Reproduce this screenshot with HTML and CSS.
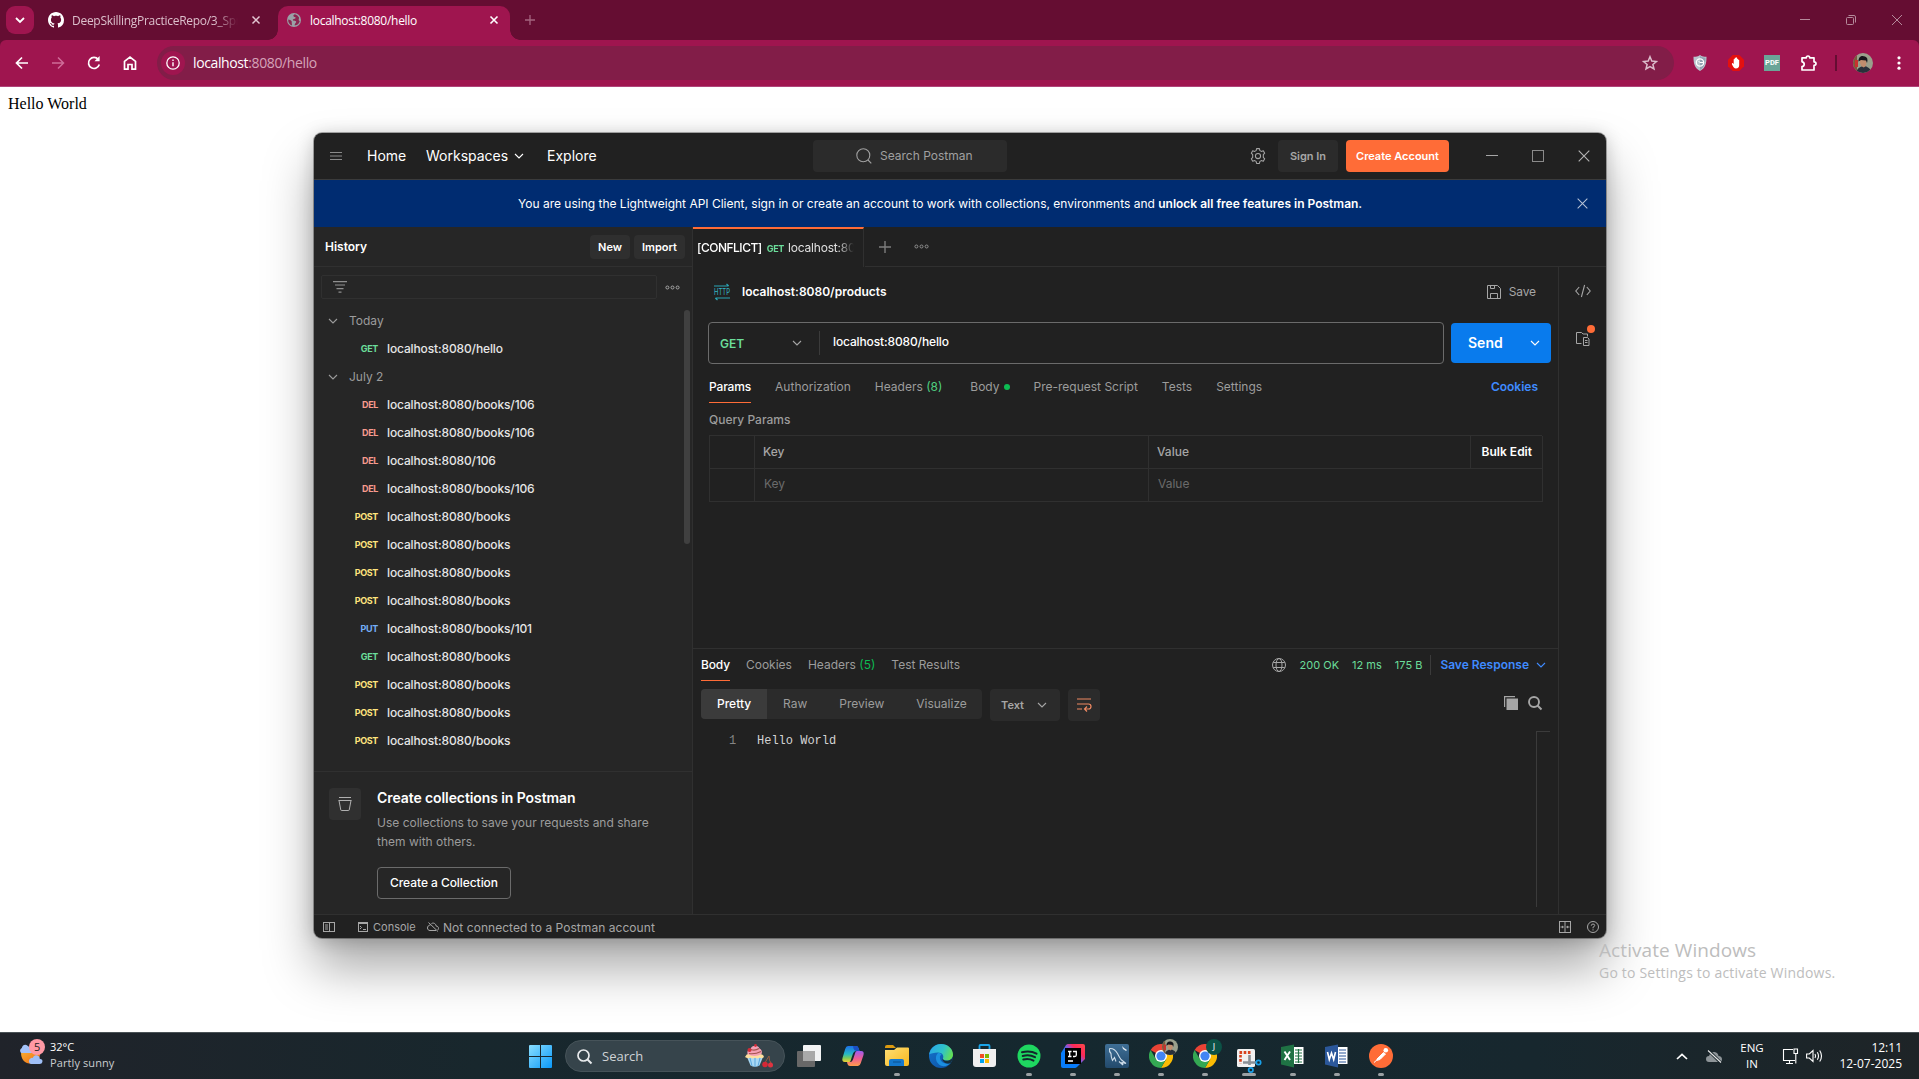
FILE: index.html
```html
<!DOCTYPE html>
<html lang="en">
<head>
<meta charset="utf-8">
<title>localhost:8080/hello</title>
<link rel="stylesheet" href="styles.css">
</head>
<body>
<svg class="defs" width="0" height="0" aria-hidden="true">
  <defs>
    <symbol id="chev" viewBox="0 0 10 6"><path d="M1 1l4 4 4-4" fill="none" stroke="currentColor" stroke-width="1.1"/></symbol>
    <symbol id="cross" viewBox="0 0 12 12"><path d="M.7.7l10.6 10.6M11.3.7L.7 11.3" fill="none" stroke="currentColor" stroke-width="1.1"/></symbol>
    <symbol id="dots" viewBox="0 0 15 5"><g fill="none" stroke="currentColor"><circle cx="2.4" cy="2.5" r="1.5"/><circle cx="7.5" cy="2.5" r="1.5"/><circle cx="12.6" cy="2.5" r="1.5"/></g></symbol>
    <symbol id="chrome" viewBox="0 0 24 24">
      <path d="M12 12L1.600 6A12 12 0 0 1 22.400 6z" fill="#ea4335"/>
      <path d="M12 6H22.400A12 12 0 0 1 12 24L17.200 15z" fill="#fbbc04"/>
      <path d="M6.800 15L1.600 6A12 12 0 0 0 12 24l5.200-9z" fill="#34a853"/>
      <circle cx="12" cy="12" r="6" fill="#fff"/><circle cx="12" cy="12" r="4.600" fill="#4285f4"/>
    </symbol>
    <symbol id="face" viewBox="0 0 20 20">
      <clipPath id="fc"><circle cx="10" cy="10" r="10"/></clipPath>
      <g clip-path="url(#fc)"><rect width="20" height="20" fill="#9aa08c"/><rect width="4" height="20" fill="#7a5a3c"/><rect x="2" y="7" width="3" height="7" fill="#c8322e"/>
      <path d="M3 20c1-5 5-7 8-7s7 3 8 7z" fill="#29303a"/><path d="M7 7q3-2 6 0l.5 3q-.5 4-3 4.500Q7.500 13 7 10z" fill="#c08e6e"/><path d="M5.500 8.500C5.500 3 9 2.300 12 3.500c2.500 1 3 3 2 6.500L13 7.500 8 7z" fill="#15151a"/></g>
    </symbol>
  </defs>
</svg>

<header class="tabstrip">
  <div class="tab-search"><svg width="10" height="6" viewBox="0 0 10 6"><path d="M1 1l4 4 4-4" fill="none" stroke="#fff" stroke-width="1.800"/></svg></div>
  <div class="btab">
    <svg class="gh" width="16" height="16" viewBox="0 0 16 16"><path fill="#fff" d="M8 0C3.580 0 0 3.580 0 8c0 3.540 2.290 6.530 5.470 7.590.4.070.55-.17.55-.38 0-.19-.01-.82-.01-1.490-2.010.37-2.530-.49-2.690-.94-.09-.23-.48-.94-.82-1.130-.28-.15-.68-.52-.01-.53.63-.01 1.080.58 1.230.82.72 1.210 1.870.87 2.330.66.07-.52.28-.87.51-1.070-1.780-.2-3.640-.89-3.640-3.950 0-.87.31-1.590.82-2.150-.08-.2-.36-1.020.08-2.120 0 0 .67-.21 2.200.82.64-.18 1.320-.27 2-.27s1.360.09 2 .27c1.530-1.040 2.200-.82 2.200-.82.44 1.100.16 1.920.08 2.120.51.56.82 1.270.82 2.150 0 3.070-1.870 3.750-3.650 3.950.29.25.54.73.54 1.480 0 1.070-.01 1.930-.01 2.200 0 .21.15.46.55.38A8.010 8.010 0 0 0 16 8c0-4.420-3.580-8-8-8z"/></svg>
    <span class="btab-title fade">DeepSkillingPracticeRepo/3_Spr</span>
    <svg class="x" width="8" height="8" viewBox="0 0 8 8"><path d="M.5.5l7 7M7.500.5l-7 7" stroke="#e3c7d3" stroke-width="1.500"/></svg>
  </div>
  <div class="btab active">
    <svg width="14" height="14" viewBox="0 0 14 14"><circle cx="7" cy="7" r="7" fill="#9aa0a6"/><path d="M8 1.200c-1 .3-2 1-1.500 2 .6 1 1.600.4 2 1.300.3.800-.5 1.300-1.500 1.400-1.200 0-1.500 1-.8 1.500.8.400 2 0 2.800.8.600.8-.3 1.800-.8 2.300-.5.600-.6 1.500-.5 2A6 6 0 0 0 12.800 8c-1-.3-1.300-1.200-1-2 .2-.7.300-1.200.2-1.600A6 6 0 0 0 8 1.200zM1.200 6.500c1.200.3 2.800.7 3.400 1.700.6 1-.2 1.600.2 2.400.3.700.2 1.300 0 1.800A6 6 0 0 1 1.200 6.500z" fill="#8c2450"/></svg>
    <span class="btab-title">localhost:8080/hello</span>
    <svg class="x" width="8" height="8" viewBox="0 0 8 8"><path d="M.5.5l7 7M7.500.5l-7 7" stroke="#fff" stroke-width="1.600"/></svg>
  </div>
  <svg class="newtab" width="10" height="10" viewBox="0 0 10 10"><path d="M5 0v10M0 5h10" stroke="#a4647f" stroke-width="1.300"/></svg>
  <div class="winctl">
    <svg width="10" height="10" viewBox="0 0 10 10"><path d="M0 4.500h10" stroke="#b58a9b"/></svg>
    <svg width="10" height="10" viewBox="0 0 10 10" fill="none" stroke="#b58a9b"><rect x=".5" y="2.500" width="7" height="7" rx="1"/><path d="M2.500.5H8A1.500 1.500 0 0 1 9.500 2v5.500"/></svg>
    <svg width="10" height="10" viewBox="0 0 10 10"><path d="M0 0l10 10M10 0L0 10" stroke="#b58a9b"/></svg>
  </div>
</header>

<nav class="toolbar">
  <div class="navs">
    <svg width="14" height="14" viewBox="0 0 14 14" fill="none" stroke="#fff" stroke-width="1.700"><path d="M13 7H2M7 1.500L1.500 7 7 12.500"/></svg>
    <svg width="14" height="14" viewBox="0 0 14 14" fill="none" stroke="#cf6c98" stroke-width="1.500"><path d="M1 7h11M7 1.500L12.500 7 7 12.500"/></svg>
    <svg width="14" height="14" viewBox="0 0 14 14" fill="none" stroke="#fff" stroke-width="1.700"><path d="M12.300 8.500A5.500 5.500 0 1 1 11.300 3.500"/><path d="M12.600 0v5.200H7.500z" fill="#fff" stroke="none"/></svg>
    <svg width="14" height="14" viewBox="0 0 14 14" fill="none" stroke="#fff" stroke-width="1.700"><path d="M1.500 13.200V5.300L7 1l5.500 4.300v7.900H9V8.500H5v4.700z"/></svg>
  </div>
  <div class="omnibox">
    <div class="info"><svg width="14" height="14" viewBox="0 0 14 14"><circle cx="7" cy="7" r="6.200" fill="none" stroke="#fff" stroke-width="1.300"/><path d="M7 6.200v4M7 3.600v1.500" stroke="#fff" stroke-width="1.400"/></svg></div>
    <span class="url">localhost<i>:8080/hello</i></span>
    <svg class="star" width="16" height="16" viewBox="0 0 16 16"><path d="M8 1.800l1.800 4.300 4.600.4-3.500 3 1.100 4.500L8 11.600 4 14l1.100-4.500-3.500-3 4.600-.4z" fill="none" stroke="#dcbccb" stroke-width="1.500"/></svg>
  </div>
  <div class="exts">
    <svg width="16" height="16" viewBox="0 0 16 16"><path d="M8 0c2 1.500 4 1.800 6.500 1.800 0 7-1 11.200-6.500 14.200C2.500 13 1.500 8.800 1.500 1.800 4 1.800 6 1.500 8 0z" fill="#b9c3cd"/><path d="M8 1v14C12.500 12.500 13.500 8 13.500 2.700 11 2.700 9.500 2 8 1z" fill="#93a2b2"/><circle cx="8" cy="7.500" r="3.700" fill="none" stroke="#fff" stroke-width="1.300"/><path d="M8 7.500h3M6.500 6l2 2" stroke="#fff"/></svg>
    <svg width="16" height="16" viewBox="0 0 16 16"><path d="M4.700 0h6.600L16 4.700v6.600L11.300 16H4.700L0 11.300V4.700z" fill="#e4100f"/><path d="M4.500 8l1.200.9V4.300q.5-.8 1 0V3q.6-.9 1.200 0v-.3q.6-.8 1.200 0V4q.6-.7 1.100 0v1q.7-.5 1 0v5c0 2-1 3.500-3.300 3.500-1.800 0-2.400-1-4-4.200q-.2-1.300.6-1.300z" fill="#fff"/></svg>
    <span class="pdf">PDF</span>
    <svg class="puzzle" width="16" height="16" viewBox="0 0 16 16"><path d="M1 2.800h4.300q0-1.800 1.700-1.800t1.700 1.800H13v4q2 0 2 1.800t-2 1.800V15H1v-3.400q2.200-.2 2.200-2.400T1 6.800z" fill="none" stroke="#fff" stroke-width="1.700" stroke-linejoin="round"/></svg>
    <span class="vsep"></span>
    <svg class="avatar" width="20" height="20"><use href="#face"/></svg>
    <svg width="4" height="14" viewBox="0 0 4 14" fill="#fff"><circle cx="2" cy="1.800" r="1.600"/><circle cx="2" cy="7" r="1.600"/><circle cx="2" cy="12.200" r="1.600"/></svg>
  </div>
</nav>

<main class="page">Hello World</main>

<section class="pm">
  <header class="pm-top">
    <svg class="burger" width="12" height="8" viewBox="0 0 12 8" stroke="#8a8a8a"><path d="M0 .5h12M0 4h12M0 7.500h12"/></svg>
    <span class="m-home">Home</span><span class="m-work">Workspaces</span><svg class="m-chev" width="10" height="6"><use href="#chev"/></svg><span>Explore</span>
    <div class="pm-search"><svg width="16" height="16" viewBox="0 0 16 16" fill="none" stroke="#a0a0a0" stroke-width="1.100"><circle cx="7.300" cy="7.300" r="6.500"/><path d="M12 12l3.300 3.300"/></svg>Search Postman</div>
    <svg class="gear" width="16" height="16" viewBox="0 0 16 16" fill="none" stroke="#a6a6a6" stroke-width="1.050" stroke-linejoin="round"><path d="M6.600.6h2.800l.5 2 1.400.8 2-.6 1.400 2.400-1.400 1.400v2.800l1.400 1.400-1.400 2.400-2-.6-1.400.8-.5 2H6.600l-.5-2-1.400-.8-2 .6-1.400-2.400 1.400-1.400V6.600L1.300 5.200l1.400-2.400 2 .6 1.400-.8z"/><circle cx="8" cy="8" r="2.600"/></svg>
    <span class="signin">Sign In</span>
    <span class="create">Create Account</span>
    <div class="pm-win">
      <svg width="12" height="12" viewBox="0 0 12 12"><path d="M0 5.500h12" stroke="#a6a6a6"/></svg>
      <svg width="12" height="12" viewBox="0 0 12 12"><rect x=".5" y=".5" width="11" height="11" fill="none" stroke="#8a8a8a"/></svg>
      <svg width="12" height="12"><use href="#cross"/></svg>
    </div>
  </header>
  <div class="banner"><p>You are using the Lightweight API Client, sign in or create an account to work with collections, environments and <b>unlock all free features in Postman.</b></p><svg width="11" height="11"><use href="#cross"/></svg></div>

  <div class="pm-body">
    <aside class="side">
      <div class="side-head"><b>History</b><span class="btn new">New</span><span class="btn imp">Import</span></div>
      <div class="side-filter"><div class="fbox"><svg width="14" height="12" viewBox="0 0 14 12" stroke="#8f8f8f" stroke-width="1.200"><path d="M0 .6h14M2 4h10M3.500 7.600h7M5.500 11.200h3"/></svg></div><svg width="15" height="5"><use href="#dots"/></svg></div>
      <div class="list">
        <div class="grp"><svg width="10" height="6"><use href="#chev"/></svg>Today</div>
        <div class="req"><em class="get">GET</em>localhost:8080/hello</div>
        <div class="grp"><svg width="10" height="6"><use href="#chev"/></svg>July 2</div>
        <div class="req"><em class="del">DEL</em>localhost:8080/books/106</div>
        <div class="req"><em class="del">DEL</em>localhost:8080/books/106</div>
        <div class="req"><em class="del">DEL</em>localhost:8080/106</div>
        <div class="req"><em class="del">DEL</em>localhost:8080/books/106</div>
        <div class="req"><em class="post">POST</em>localhost:8080/books</div>
        <div class="req"><em class="post">POST</em>localhost:8080/books</div>
        <div class="req"><em class="post">POST</em>localhost:8080/books</div>
        <div class="req"><em class="post">POST</em>localhost:8080/books</div>
        <div class="req"><em class="put">PUT</em>localhost:8080/books/101</div>
        <div class="req"><em class="get">GET</em>localhost:8080/books</div>
        <div class="req"><em class="post">POST</em>localhost:8080/books</div>
        <div class="req"><em class="post">POST</em>localhost:8080/books</div>
        <div class="req"><em class="post">POST</em>localhost:8080/books</div>
        <span class="thumb"></span>
      </div>
      <div class="promo">
        <div class="promo-ico"><svg width="14" height="14" viewBox="0 0 14 14" fill="none" stroke="#b0b0b0"><path d="M1 .5h12M.5 3.500h13M1 3.500l1.800 9.500q.1.500.6.500h7.200q.5 0 .6-.5L13 3.500"/></svg></div>
        <div><h3>Create collections in Postman</h3><p>Use collections to save your requests and share them with others.</p><span class="outline">Create a Collection</span></div>
      </div>
    </aside>

    <div class="work">
      <div class="tabs">
        <div class="tab"><span class="tab-in">[CONFLICT]<em>GET</em><i>localhost:808</i></span></div>
        <div class="tabs-rest"><svg width="12" height="12" viewBox="0 0 12 12"><path d="M6 0v12M0 6h12" stroke="#7d7d7d" stroke-width="1.400"/></svg><svg width="15" height="5"><use href="#dots"/></svg></div>
      </div>
      <div class="split">
        <div class="col">
          <div class="request">
            <div class="title-row">
              <svg width="16" height="16" viewBox="0 0 16 16"><path d="M0 2h14.500M12.500 0l2.200 2M1.500 14H16M1.300 14l2.200 2" stroke="#2ba6b6" fill="none" stroke-width="1.200"/><text x="0" y="11.200" textLength="16" lengthAdjust="spacingAndGlyphs" font-family="Inter, sans-serif" font-size="9" fill="#35b7c8">HTTP</text></svg>
              <b>localhost:8080/products</b>
              <span class="save"><svg width="14" height="14" viewBox="0 0 14 14" fill="none" stroke="#a6a6a6"><path d="M.5.5h10l3 3v10H.5zM3.500.5v3h4v-3M3.500 13.500v-5h7v5"/></svg>Save</span>
            </div>
            <div class="url-row">
              <div class="urlbox"><b>GET</b><svg width="10" height="6"><use href="#chev"/></svg><span class="uline"></span><span class="utext">localhost:8080/hello</span></div>
              <div class="send">Send<svg width="10" height="6"><use href="#chev"/></svg></div>
            </div>
            <div class="rtabs"><span class="on t1">Params</span><span class="t2">Authorization</span><span class="t3">Headers <u>(8)</u></span><span class="t4">Body<i class="dot"></i></span><span class="t5">Pre-request Script</span><span class="t6">Tests</span><span>Settings</span><b>Cookies</b></div>
            <div class="qp">Query Params</div>
            <div class="table">
              <span></span><span class="th">Key</span><span class="th">Value</span><span class="bulk">Bulk Edit</span>
              <span></span><span class="ph">Key</span><span class="ph wide">Value</span>
            </div>
          </div>
          <div class="response">
            <div class="rs-tabs"><span class="on s1">Body</span><span class="s2">Cookies</span><span class="s3">Headers <u>(5)</u></span><span>Test Results</span>
              <div class="rs-meta"><svg width="14" height="14" viewBox="0 0 14 14" fill="none" stroke="#a6a6a6"><circle cx="7" cy="7" r="6.500"/><ellipse cx="7" cy="7" rx="3" ry="6.500"/><path d="M1.200 4.500h11.600M1.200 9.500h11.600"/></svg><span>200 OK</span><span>12 ms</span><span>175 B</span><i></i><b>Save Response</b><svg class="bl" width="10" height="6"><use href="#chev"/></svg></div>
            </div>
            <div class="view">
              <div class="seg"><span class="sel">Pretty</span><span>Raw</span><span>Preview</span><span>Visualize</span></div>
              <div class="fmt">Text<svg width="10" height="6"><use href="#chev"/></svg></div>
              <div class="wrap"><svg width="15" height="14" viewBox="0 0 15 14" fill="none" stroke="#f08a63" stroke-width="1.200"><path d="M0 1h14M0 6h11.500a2.500 2.500 0 0 1 0 5H7.500M0 11h5M10 8.500L7.500 11 10 13.500"/></svg></div>
              <div class="view-r">
                <svg width="14" height="14" viewBox="0 0 14 14"><path d="M.6 11V.6H11" fill="none" stroke="#a6a6a6" stroke-width="1.200"/><rect x="2.500" y="2.500" width="11.500" height="11.500" fill="#a6a6a6"/></svg>
                <svg width="14" height="14" viewBox="0 0 14 14" fill="none" stroke="#a6a6a6" stroke-width="1.900"><circle cx="6" cy="6" r="5"/><path d="M9.500 9.500l4 4"/></svg>
              </div>
            </div>
            <div class="code"><span class="ln">1</span><span class="src">Hello World</span><span class="ruler"></span></div>
          </div>
        </div>
        <div class="rail">
          <svg width="16" height="12" viewBox="0 0 16 12" fill="none" stroke="#a6a6a6" stroke-width="1.100"><path d="M4.200 2L.8 6l3.400 4M11.800 2l3.400 4-3.400 4M9.600 0L6.400 12"/></svg>
          <svg class="doc" width="20" height="22" viewBox="0 0 20 22" fill="none" stroke="#a6a6a6"><path d="M6.500 18.500h-5v-11h5l1.500 1.500h4.500v2.500"/><path d="M8.500 12.500h4l1.500 1.500v6.500H8.500zM10 15.500h2.500M10 17.500h2.500"/><circle cx="16" cy="4" r="4" fill="#ff6c37" stroke="none"/></svg>
        </div>
      </div>
    </div>
  </div>

  <footer class="status">
    <svg class="lay" width="12" height="10" viewBox="0 0 12 10" fill="none" stroke="#a6a6a6"><rect x=".5" y=".5" width="11" height="9"/><path d="M6.500 0v10M2 3h3M2 5h3M2 7h3"/></svg>
    <svg width="10" height="10" viewBox="0 0 10 10" fill="none" stroke="#a6a6a6"><rect x=".5" y=".5" width="9" height="9"/><path d="M0 1.500h10M2 4l1.500 1.500L2 7M5 7.500h3"/></svg>
    <span class="con">Console</span>
    <svg width="12" height="10" viewBox="0 0 12 10" fill="none" stroke="#a6a6a6"><path d="M3.500 3C1.500 3 .5 4.500.5 6s1 2.500 2.500 2.500h6M4.500 1.500C7 .3 9 2 9 4c1.500 0 2.500 1 2.500 2.300 0 .7-.3 1.200-.8 1.700M1.500.5L11 9.500"/></svg>
    <span class="nc">Not connected to a Postman account</span>
    <svg class="pane" width="12" height="12" viewBox="0 0 12 12" fill="none" stroke="#a6a6a6"><rect x=".5" y=".5" width="11" height="11"/><path d="M6 0v12M1.500 6h3M7.500 6h3"/><path d="M3 4.500L4.800 6 3 7.500zM9 4.500L7.200 6 9 7.500z" fill="#a6a6a6" stroke="none"/></svg>
    <svg width="12" height="12" viewBox="0 0 12 12" fill="none" stroke="#a6a6a6"><circle cx="6" cy="6" r="5.500"/><path d="M4.300 4.700q0-1.700 1.700-1.700t1.700 1.500Q7.700 5.600 6 6.200V7.300M6 8.300v1.200"/></svg>
  </footer>
</section>

<div class="activate"><p class="a1">Activate Windows</p><p class="a2">Go to Settings to activate Windows.</p></div>

<footer class="taskbar">
  <div class="weather">
    <svg width="28" height="28" viewBox="0 0 28 28"><defs><linearGradient id="sun" x1="0" y1="0" x2="1" y2="1"><stop offset="0" stop-color="#f9b233"/><stop offset="1" stop-color="#ef6a12"/></linearGradient></defs><path d="M3 11h19q1 10-6 13.500Q3 26 3 13z" fill="url(#sun)"/><path d="M3 14a3.500 3.500 0 0 1 .8-5Q5 5 8.500 6L14 10v4z" fill="#a3c2f8"/><path d="M13 25a3 3 0 0 1-.6-5.500q1-1 2.200-.6 1.500-3.700 5-2.300 2.400.8 2.200 3.200 3.200.6 2.600 3.200-.4 2-2.800 2z" fill="#9fbff7"/><circle cx="19" cy="8" r="8" fill="#ff99a4"/><text x="19.200" y="12" text-anchor="middle" font-family="Open Sans, sans-serif" font-size="11" fill="#222">5</text></svg>
    <div><p class="w1">32°C</p><p class="w2">Partly sunny</p></div>
  </div>
  <svg class="start" width="23" height="23" viewBox="0 0 23 23"><defs><linearGradient id="win" x1="0" y1="0" x2="1" y2="1" ><stop offset="0" stop-color="#8adfff"/><stop offset="1" stop-color="#0a98f8"/></linearGradient><mask id="wm"><path fill="#fff" d="M0 0h11v11H0zM12 0h11v11H12zM0 12h11v11H0zM12 12h11v11H12z"/></mask></defs><rect width="23" height="23" rx="1" fill="url(#win)" mask="url(#wm)"/></svg>
  <div class="tsearch"><svg width="15" height="15" viewBox="0 0 15 15" fill="none" stroke="#e8eaec" stroke-width="1.700"><circle cx="6.500" cy="6.500" r="5.500"/><path d="M10.500 10.500l4 4" stroke-width="2"/></svg><span>Search</span>
    <svg class="sundae" width="28" height="24" viewBox="0 0 28 24"><path d="M2 13h16l-3.500 8.500q-4.500 2.500-9 0z" fill="#a8d8f4"/><path d="M5 14l2 8M10 14v9M15 14l-2 8" stroke="#5aa6dc"/><path d="M0 13q2-4 5-3h9q4-.5 5 3-2 2-4.500.5-2 2-4.500 0-2.500 2-4.500 0-3 1.500-5.500-.5z" fill="#ffdf9e"/><path d="M2.500 10q-1-4 3-5Q7 1 12 2q2 .5 2.500 2.500 3.500 2 2 5.500-7 4-14 0z" fill="#f4a0b4"/><path d="M4 9.500q6 1 12-2M6 5.500q4 1.500 8-1" stroke="#a4544e" fill="none" stroke-width="1.200"/><circle cx="4.500" cy="6" r="2" fill="#d42c38"/><circle cx="10.500" cy="1.500" r="1.400" fill="#d42c38"/><path d="M20 19q2-4 4-7 0 5 2 7" stroke="#9b5b3f" fill="none"/><circle cx="20" cy="20.500" r="2.800" fill="#d62836"/><circle cx="25.500" cy="21" r="2.500" fill="#e03340"/></svg>
  </div>
  <div class="apps">
    <div class="app"><svg width="24" height="24" viewBox="0 0 24 24"><rect x="6" y="1" width="18" height="16" rx="1" fill="#f2f3f4"/><rect x="0" y="7" width="18" height="16" rx="1" fill="#686868"/><path d="M6 7h12v10H6z" fill="#a9a9a9"/></svg></div>
    <div class="app"><svg width="24" height="24" viewBox="0 0 24 24"><defs><linearGradient id="c1" x1="0" y1="0" x2="0" y2="1"><stop offset="0" stop-color="#1d6fe8"/><stop offset=".5" stop-color="#25b8c6"/><stop offset=".75" stop-color="#7ccb5a"/><stop offset="1" stop-color="#f6d133"/></linearGradient><linearGradient id="c2" x1="0" y1="0" x2="0" y2="1"><stop offset="0" stop-color="#9a5cf2"/><stop offset=".5" stop-color="#ee5c95"/><stop offset="1" stop-color="#ff9d4a"/></linearGradient></defs><path d="M7 2h8q2 0 2.500 2L18.500 7H15q-2.200 0-3 2.500L9.500 17Q9 18.500 7 18H4Q.5 18 1.500 14L4.200 5Q5 2 7 2z" fill="url(#c1)"/><path d="M12 2h3q2 0 2.500 2l1 3h-3.300q-2-.3-2.700-2.500z" fill="#1a4fc4"/><path d="M17 22H9q-2 0-2.500-2L6 18h3q2.200 0 3-2.500L14.500 8Q15.200 6.500 17 7h3q3.500 0 2.500 4l-2.700 8q-.8 3-2.800 3z" fill="url(#c2)"/></svg></div>
    <div class="app"><svg width="24" height="24" viewBox="0 0 24 24"><defs><linearGradient id="fo" x1="0" y1="0" x2="1" y2="1"><stop offset="0" stop-color="#ffdf76"/><stop offset="1" stop-color="#f8b81c"/></linearGradient></defs><path d="M0 3q0-2 2-2h6l3 3H0z" fill="#dc9a10"/><path d="M0 6h9l3-2.500h11q1 0 1 1V20q0 2-2 2H2q-2 0-2-2z" fill="url(#fo)"/><path d="M4 22v-5q0-2 2-2h11q2 0 2 2v5z" fill="#1478ce"/><path d="M8 18h8" stroke="#0b5090"/></svg><i></i></div>
    <div class="app"><svg width="24" height="24" viewBox="0 0 24 24"><defs><linearGradient id="e1" x1="0" y1=".3" x2="1" y2=".6"><stop offset="0" stop-color="#2aa8e8"/><stop offset=".55" stop-color="#2fc3c9"/><stop offset="1" stop-color="#67e04e"/></linearGradient><linearGradient id="e2" x1="0" y1="0" x2="1" y2="1"><stop offset="0" stop-color="#1474cf"/><stop offset="1" stop-color="#0d4f9e"/></linearGradient></defs><circle cx="12" cy="12" r="12" fill="url(#e2)"/><path d="M.2 10.500C1 4.500 6 0 12 0c7 0 12 5 12 10.500 0 4-3 6-6.500 6-3 0-4-1.200-3.500-2.200 1.200-2.800-1-5.800-5-5.800-4 0-7.500 1-8.800 2z" fill="url(#e1)"/><path d="M9 9c-3 3-2.800 8 1 11.500 3.500 3 9 1.500 11.500-1.500-3 1.300-7 .5-8.800-1.500C10.800 15.500 10 12 12.500 10.500 11.500 9.300 10.500 8.800 9 9z" fill="#1b8fe0"/><path d="M24.200 12q-.7 3-3.700 4.200-3 1-5.500 0-1.500-1-1-2l-.6 1.800q3 5 8.100 3 2.700-3 2.700-7z" fill="#17303a"/></svg></div>
    <div class="app"><svg width="24" height="24" viewBox="0 0 24 24"><path d="M6.500 6V2q0-1 1-1h8q1 0 1 1v4" fill="none" stroke="#1ba4e8" stroke-width="1.800"/><path d="M0 5h23v15q0 3-3 3H3q-3 0-3-3z" fill="#f0f0f0"/><path d="M7 10h4v4H7z" fill="#f25022"/><path d="M12 10h4v4h-4z" fill="#7fba00"/><path d="M7 15h4v4H7z" fill="#00a4ef"/><path d="M12 15h4v4h-4z" fill="#ffb900"/></svg></div>
    <div class="app"><svg width="24" height="24" viewBox="0 0 24 24"><circle cx="12" cy="12" r="11.500" fill="#1ed760"/><path d="M5 8.300q8-2.200 14.500 1.400M5.700 12q6.600-1.800 12.300 1.200M6.300 15.500q5.500-1.400 10.200 1.100" fill="none" stroke="#14252c" stroke-width="2" stroke-linecap="round"/></svg><i></i></div>
    <div class="app"><svg width="24" height="24" viewBox="0 0 24 24"><defs><linearGradient id="ij" x1="0" y1="1" x2="1" y2="0"><stop offset="0" stop-color="#087cfa"/><stop offset=".4" stop-color="#087cfa"/><stop offset=".58" stop-color="#8a56d8"/><stop offset=".72" stop-color="#fe2857"/><stop offset="1" stop-color="#fc4a4a"/></linearGradient></defs><path d="M7 0h15q2 0 2 2v13l-8 8q-1 1-2 1H2q-2 0-2-2V9l5-8q1-1 2-1z" fill="url(#ij)"/><rect x="4" y="4" width="16" height="16" fill="#000"/><path d="M7 7.500h3.500M8.700 7.500v5M7 12.500h3.500M12 7.500h3.300v3.500q0 1.500-1.500 1.500H12M7 17h5" stroke="#fff" stroke-width="1.300" fill="none"/></svg><i></i></div>
    <div class="app"><svg width="24" height="24" viewBox="0 0 24 24"><defs><linearGradient id="my" x1="0" y1="0" x2="0" y2="1"><stop offset="0" stop-color="#3f6f96"/><stop offset="1" stop-color="#234a6c"/></linearGradient></defs><rect width="24" height="24" rx="2" fill="url(#my)"/><path d="M4.500 4.500q5-.5 8 5 2 4 3.500 6l5 4-4-1 1 2.500-4-3.500M4.500 4.500q-.5 3 1.500 5 0 4 1.500 7l2-3 1.500 4" fill="none" stroke="#cfdde9" stroke-width="1.100"/><path d="M17 2l1 3 3 2 1-1-3-2z" fill="#e7eef4"/></svg><i></i></div>
    <div class="app"><svg width="24" height="24"><use href="#chrome"/></svg><svg class="bdg" width="16" height="16" viewBox="0 0 20 20"><use href="#face"/></svg><i></i></div>
    <div class="app"><svg width="24" height="24"><use href="#chrome"/></svg><b class="bdg">J</b><i></i></div>
    <div class="app"><svg width="24" height="24" viewBox="0 0 24 24"><rect x="0" y="5" width="18" height="18" rx="1.500" fill="#f1f1f1"/><path d="M2.500 8.500h11.500" stroke="#d8431f" stroke-width="3" stroke-dasharray="2.600 1.600"/><path d="M3.500 11v8.500" stroke="#d8431f" stroke-width="2.600" stroke-dasharray="2.600 1.500"/><path d="M12.500 11v10M6 18.500h13" stroke="#8a9096" stroke-width="2.600"/><g fill="none" stroke="#1aa0e8" stroke-width="1.700"><circle cx="21.500" cy="18.500" r="2.200"/><circle cx="13.800" cy="26" r="2.200"/></g></svg><i class="run"></i></div>
    <div class="app"><svg width="24" height="24" viewBox="0 0 24 24"><path d="M10 3h12.500v17H10z" fill="#fff"/><path d="M14 6h7M14 9h7M14 12h7M14 15h7M14 18h7M17.500 5v14" stroke="#207245" stroke-width="1.200"/><path d="M0 3l13-2.500v23L0 20.500z" fill="#1f7244"/><path d="M3.500 7.500l5.500 8.500M9 7.500L3.500 16" stroke="#fff" stroke-width="1.900"/></svg><i></i></div>
    <div class="app"><svg width="24" height="24" viewBox="0 0 24 24"><path d="M10 3h12.500v17H10z" fill="#fff"/><path d="M14 6h7M14 9h7M14 12h7M14 15h7M14 18h7" stroke="#2b579a" stroke-width="1.100"/><path d="M0 3l13-2.500v23L0 20.500z" fill="#2b579a"/><path d="M2.500 8l1.800 7.500L6.500 9l2.200 6.500L10.500 8" stroke="#fff" stroke-width="1.600" fill="none"/></svg><i></i></div>
    <div class="app"><svg width="24" height="24" viewBox="0 0 24 24"><circle cx="12" cy="12" r="12" fill="#ff6c37"/><circle cx="16.800" cy="6.300" r="2.300" fill="#fff"/><path d="M8 15l6.500-6.500 2 1.500-5.500 5.500-3 .8zM5 18.500l4-3.500" fill="#fff" stroke="#fff" stroke-width="1"/></svg><i></i></div>
  </div>
  <div class="tray">
    <svg width="12" height="7" viewBox="0 0 12 7"><path d="M1 6l5-4.700L11 6" fill="none" stroke="#fff" stroke-width="1.700"/></svg>
    <svg class="cloud" width="16" height="13" viewBox="0 0 16 13"><path d="M3 12a3 3 0 0 1 0-6q1.500-4.500 5.500-4 3.500.4 4 4 3.500.3 3.500 3.200 0 2.800-3 2.800z" fill="#8d9498"/><path d="M2.500.5l12 12" stroke="#17252b" stroke-width="3"/><path d="M2 .5l13 12" stroke="#e8e8e8" stroke-width="1.100"/></svg>
    <div class="lang"><p>ENG</p><p>IN</p></div>
    <svg class="mon" width="17" height="17" viewBox="0 0 17 17" fill="none" stroke="#fff" stroke-width="1.100"><path d="M11 1.500H1.500v11H13M4 15.500h7M7.500 12.500v3M12 1h3.500v4.500H12zM13.800 5.500v10"/></svg>
    <svg class="vol" width="17" height="14" viewBox="0 0 17 14" fill="none" stroke="#fff" stroke-width="1.100"><path d="M.6 5h2.700L7 1.500v11L3.300 9H.6zM9 5q1.200 2 0 4M11.300 3.200q2.400 3.800 0 7.600M13.700 1.500q3.600 5.500 0 11"/></svg>
    <div class="clock"><p>12:11</p><p>12-07-2025</p></div>
  </div>
</footer>
</body>
</html>
```
FILE: styles.css
```css
* { box-sizing: border-box; }
body { margin: 0; width: 1919px; height: 1079px; overflow: hidden; display: flex; flex-direction: column; background: #fff; font-family: "Open Sans", sans-serif; position: relative; }
p, h3 { margin: 0; }
i, em { font-style: normal; }
u { text-decoration: none; }
svg { display: block; flex: none; overflow: visible; }
.defs { position: absolute; }

/* browser tab strip */
.tabstrip { height: 40px; flex: none; background: #650d32; box-shadow: 0 8px 0 #650d32; display: flex; align-items: center; padding-left: 6px; color: #dcc0cc; font-size: 12px; }
.tab-search { width: 28px; height: 28px; border-radius: 9px; background: #9f154f; display: grid; place-items: center; }
.btab { height: 34px; margin-top: 6px; padding-bottom: 6px; display: flex; align-items: center; width: 244px; padding-left: 14px; }
.btab-title { width: 166px; margin-left: 8px; white-space: nowrap; overflow: hidden; letter-spacing: -.28px; }
.btab-title.fade { mask-image: linear-gradient(90deg, #000 86%, transparent); }
.btab .x { margin-left: 14px; }
.btab.active { width: 232px; padding-left: 9px; background: #9f154f; border-radius: 10px 10px 0 0; color: #fff; position: relative; }
.btab.active .btab-title { width: 166px; margin-left: 9px; }
.btab.active .x { margin-left: 14px; }
.btab.active::before, .btab.active::after { content: ""; position: absolute; bottom: 0; width: 10px; height: 10px; }
.btab.active::before { left: -10px; background: radial-gradient(circle at 0 0, transparent 9.5px, #9f154f 10px); }
.btab.active::after { right: -10px; background: radial-gradient(circle at 100% 0, transparent 9.5px, #9f154f 10px); }
.newtab { margin-left: 15px; }
.winctl { margin-left: auto; display: flex; gap: 36px; padding-right: 17px; }

/* browser toolbar */
.toolbar { height: 47px; flex: none; background: #9f154f; border-bottom: 1px solid #b0447a; display: flex; align-items: center; padding-left: 15px; border-radius: 6px 6px 0 0; }
.navs { display: flex; gap: 22px; width: 142px; }
.omnibox { width: 1517px; height: 34px; border-radius: 17px; background: #821d48; display: flex; align-items: center; padding: 0 16px 0 4px; }
.info { width: 24px; height: 24px; border-radius: 50%; background: #9f154f; display: grid; place-items: center; }
.url { margin: -1px 0 0 8px; color: #fff; font-size: 14px; letter-spacing: -.38px; }
.url i { color: #d5a3b9; }
.star { margin-left: auto; }
.exts { display: flex; align-items: center; gap: 20px; padding-left: 18px; }
.pdf { width: 16px; height: 16px; background: #6ba598; color: #fff; font: 700 7.5px/16px Roboto, sans-serif; text-align: center; }
.puzzle { margin-left: 1px; }
.vsep { width: 2px; height: 16px; background: #650d32; margin: 0 -3px 0 -2px; }
.avatar { margin: 0 4px 0 -1px; }

.page { flex: 1; padding: 8px; font: 16px/normal "Liberation Serif", serif; color: #000; }

/* API client window */
.pm { position: absolute; left: 314px; top: 133px; width: 1292px; height: 805px; border-radius: 8px; overflow: clip; background: #212121; color: #fff; font: 12px/16px Inter, sans-serif; display: flex; flex-direction: column; box-shadow: 0 0 0 1px rgba(0,0,0,.3), 0 2px 18px rgba(0,0,0,.2), 0 30px 50px rgba(0,0,0,.34); }
.pm-top { height: 47px; border-bottom: 1px solid #3b3b3b; display: flex; align-items: center; padding-left: 16px; font-size: 14px; flex: none; }
.m-home { margin-left: 25px; width: 59px; }
.m-work { width: 88px; }
.m-chev { margin-right: 23px; }
.pm-top > .m-chev + span { width: 266px; }
.pm-search { width: 194px; height: 32px; border-radius: 4px; background: #2b2b2b; color: #a0a0a0; font-size: 12px; display: flex; align-items: center; gap: 8px; padding-left: 43px; }
.gear { margin-left: 243px; }
.signin, .create { height: 32px; border-radius: 4px; font-size: 11px; line-height: 32px; font-weight: 600; text-align: center; }
.signin { width: 60px; margin-left: 12px; background: #2b2b2b; color: #a6a6a6; }
.create { width: 103px; margin-left: 8px; background: #ff6c37; }
.pm-win { display: flex; gap: 34px; margin-left: 37px; color: #b5b5b5; }
.banner { height: 47px; flex: none; background: #002c71; display: flex; align-items: center; padding-left: 204px; }
.banner p { width: 858px; white-space: nowrap; }
.banner b { font-weight: 600; }
.banner svg { margin-left: 201px; color: #b8c4d8; }

.pm-body { flex: 1; display: flex; min-height: 0; }
.side { width: 379px; background: #262626; border-right: 1px solid #303030; display: flex; flex-direction: column; }
.side-head { height: 40px; flex: none; border-bottom: 1px solid #303030; display: flex; align-items: center; padding: 0 7px 0 11px; gap: 4px; }
.side-head b { margin-right: auto; font-weight: 600; }
.btn { height: 24px; border-radius: 4px; background: #2f2f2f; font: 600 11px/24px Inter, sans-serif; text-align: center; }
.new { width: 40px; }
.imp { width: 51px; }
.side-filter { height: 40px; flex: none; display: flex; align-items: center; gap: 8px; padding-left: 7px; color: #a6a6a6; }
.fbox { width: 336px; height: 24px; border: 1px solid #303030; border-radius: 2px; padding: 5px 0 0 11px; }
.list { flex: 1; position: relative; overflow: hidden; }
.grp, .req { height: 28px; display: flex; align-items: center; }
.grp { padding-left: 14px; color: #9c9c9c; gap: 11px; }
.req em { width: 64px; margin-right: 9px; text-align: right; font-size: 9px; font-weight: 700; letter-spacing: -.35px; }
.req { color: #e6e6e6; letter-spacing: -.13px; font-weight: 500; }
.get { color: #6bdd9a; }
.del { color: #f79a8e; }
.post { color: #ffe47e; }
.put { color: #74aef6; }
.thumb { position: absolute; right: 2px; top: 3px; width: 6px; height: 234px; border-radius: 3px; background: #404040; }
.promo { height: 143px; flex: none; border-top: 1px solid #303030; display: flex; gap: 16px; padding: 16px 15px; }
.promo-ico { width: 32px; height: 32px; flex: none; border-radius: 4px; background: #303030; display: grid; place-items: center; }
.promo h3 { font-size: 14px; font-weight: 600; line-height: 20px; letter-spacing: -.09px; }
.promo p { color: #9c9c9c; line-height: 19px; margin: 5px 0 16px; width: 290px; }
.outline { display: block; width: 134px; height: 32px; border: 1px solid #6b6b6b; border-radius: 4px; line-height: 30px; text-align: center; font-weight: 500; letter-spacing: -.06px; }

.work { flex: 1; display: flex; flex-direction: column; }
.tabs { height: 40px; flex: none; display: flex; }
.tab { width: 171px; border-top: 2px solid #ff6c37; border-right: 1px solid #303030; padding-left: 4px; display: flex; align-items: center; }
.tab-in { width: 160px; overflow: hidden; white-space: nowrap; font-weight: 500; letter-spacing: -.5px; mask-image: linear-gradient(90deg, #000 88%, transparent 98%); }
.tab-in em { font-size: 9px; font-weight: 700; color: #6bdd9a; margin: 0 4px 0 5px; letter-spacing: -.3px; }
.tab-in i { color: #e0e0e0; font-weight: 400; letter-spacing: -.2px; }
.tabs-rest { flex: 1; border-bottom: 1px solid #303030; display: flex; align-items: center; gap: 23px; padding-left: 14px; margin-left: 1px; color: #8f8f8f; }
.split { flex: 1; display: flex; }
.col { width: 865px; display: flex; flex-direction: column; }
.rail { flex: 1; border-left: 1px solid #303030; display: flex; flex-direction: column; align-items: center; padding-top: 18px; gap: 28px; }
.doc { margin-left: 4px; }
.request { height: 381px; padding-left: 16px; }
.title-row { height: 48px; display: flex; align-items: center; padding: 1px 22px 0 5px; }
.title-row b { font-weight: 600; margin-left: 12px; }
.save { margin-left: auto; display: flex; gap: 8px; color: #a6a6a6; letter-spacing: -.1px; }
.save svg { margin-top: 1px; }
.url-row { margin: 7px 0 0 -1px; display: flex; align-items: center; gap: 7px; }
.urlbox { width: 736px; height: 42px; border: 1px solid #6b6b6b; border-radius: 4px; display: flex; align-items: center; padding-left: 11px; }
.urlbox b { width: 72px; color: #6bdd9a; font-weight: 600; padding-top: 1px; }
.urlbox svg, .fmt svg { color: #a6a6a6; }
.uline { width: 1px; height: 24px; background: #3b3b3b; margin: 0 13px 0 17px; }
.utext { font-weight: 500; margin-top: -3px; letter-spacing: -.13px; }
.send { width: 100px; height: 40px; border-radius: 4px; background: #097bed; font-size: 14px; font-weight: 600; display: flex; align-items: center; padding-left: 17px; justify-content: space-between; padding-right: 11px; }
.rtabs { height: 39px; display: flex; color: #9c9c9c; padding: 15px 20px 0 0; }
.rtabs u, .rs-tabs u { color: #4fcf80; }
.rtabs b { margin-left: auto; color: #3f8bff; font-weight: 600; }
.on { color: #fff; font-weight: 500; border-bottom: 1px solid #ff6c37; height: 24px; letter-spacing: -.15px; }
.t1 { margin-right: 24px; }
.t2 { margin-right: 24px; }
.t3 { margin-right: 28px; }
.t4 { margin-right: 24px; }
.t5 { margin-right: 24px; }
.t6 { margin-right: 24px; }
.dot { display: inline-block; width: 6px; height: 6px; border-radius: 50%; background: #0cbb52; margin: 0 0 1px 4px; }
.qp { height: 32px; color: #9c9c9c; font-weight: 500; padding-top: 9px; }
.table { width: 833px; display: grid; grid-template-columns: 45px 394px 322px 72px; grid-template-rows: 33px 33px; border: 1px solid #303030; border-width: 1px 0 0 1px; }
.table span { border: 1px solid #303030; border-width: 0 1px 1px 0; padding: 8px 0 0 8px; }
.table .th { color: #a6a6a6; font-weight: 500; }
.table .ph { color: #6b6b6b; padding-left: 9px; padding-top: 7px; }
.table .bulk { font-weight: 600; text-align: right; padding: 8px 10px 0 0; }
.table .wide { grid-column: span 2; }
.response { flex: 1; border-top: 1px solid #303030; display: flex; flex-direction: column; }
.rs-tabs { height: 40px; padding: 8px 12px 0 8px; display: flex; color: #9c9c9c; }
.s1 { margin-right: 16px; }
.s2 { margin-right: 16px; }
.s3 { margin-right: 16px; }
.rs-tabs u { color: #0cbb52; }
.rs-meta { margin-left: auto; display: flex; height: 16px; align-items: center; color: #6bdd9a; font-size: 11px; }
.rs-meta span { margin-left: 13px; }
.rs-meta svg + span { margin-left: 14px; }
.rs-meta i { width: 1px; height: 20px; background: #3b3b3b; margin: 0 9px 0 8px; }
.rs-meta b { color: #3f8bff; font-size: 12px; font-weight: 600; margin-right: 7px; }
.bl { color: #3f8bff; }
.view { display: flex; padding-left: 8px; height: 32px; }
.seg { width: 281px; height: 30px; background: #2b2b2b; border-radius: 4px; display: flex; overflow: hidden; color: #9c9c9c; line-height: 30px; }
.seg span { padding: 0 16px; }
.seg .sel { width: 66px; background: #3b3b3b; color: #fff; font-weight: 500; }
.fmt { margin-left: 8px; width: 70px; height: 32px; border-radius: 4px; background: #2b2b2b; color: #a6a6a6; font-size: 11px; font-weight: 600; display: flex; align-items: center; padding-left: 11px; justify-content: space-between; padding-right: 13px; }
.wrap { margin-left: 8px; width: 32px; height: 32px; border-radius: 4px; background: #2b2b2b; display: grid; place-items: center; }
.view-r { margin-left: auto; display: flex; gap: 10px; padding: 7px 16px 0 0; }
.code { flex: 1; display: flex; padding: 10px 8px 7px 36px; font: 12px/20px "Liberation Mono", monospace; color: #d4d4d4; }
.ln { width: 28px; color: #858585; }
.ruler { margin-left: auto; width: 14px; border: 1px solid #3b3b3b; border-width: 1px 0 0 1px; }

.status { height: 24px; flex: none; border-top: 1px solid #303030; display: flex; align-items: center; padding: 1px 7px 0 9px; color: #a6a6a6; }
.lay { margin-right: 23px; }
.con { font-size: 11px; margin-left: 5px; width: 54px; }
.nc { margin: 1px 0 0 4px; letter-spacing: .05px; }
.pane { margin-left: auto; margin-right: 16px; }

/* desktop watermark, over page and window */
.activate { position: absolute; left: 1599px; top: 937px; color: #bdbdbd; white-space: nowrap; }
.a1 { font-size: 19px; line-height: 26px; letter-spacing: .08px; }
.a2 { font-size: 14px; line-height: 20px; letter-spacing: .2px; }

/* taskbar */
.taskbar { height: 47px; flex: none; border-top: 1px solid #4a5256; background: linear-gradient(90deg, #20232a, #18272d 25%, #15282f 55%, #17272e 80%, #1e2427); display: flex; align-items: center; color: #fff; font-size: 11px; line-height: 16px; }
.weather { width: 529px; display: flex; gap: 4px; padding: 0 0 2px 18px; }
.w2 { color: #c9cdd0; letter-spacing: .1px; }
.tsearch { margin-left: 13px; width: 220px; height: 32px; border-radius: 16px; background: #36444b; border: 1px solid #465359; display: flex; align-items: center; padding: 0 11px; color: #cfd3d6; font-size: 13px; }
.tsearch span { margin-left: 10px; }
.sundae { margin-left: auto; }
.apps { display: flex; margin-left: 2px; }
.app { width: 44px; height: 46px; display: grid; place-items: center; position: relative; }
.app > i { position: absolute; bottom: 3px; left: 19px; width: 6px; height: 3px; border-radius: 2px; background: #9aa0a3; }
.app > .run { width: 14px; left: 15px; }
.bdg { position: absolute; right: 5px; top: 6px; }
b.bdg { width: 16px; height: 16px; border-radius: 50%; background: #0c5246; font: 9px/16px "Open Sans", sans-serif; text-align: center; }
.tray { margin-left: auto; display: flex; align-items: center; padding-right: 17px; }
.cloud { margin-left: 18px; }
.lang { margin-left: 17px; width: 26px; text-align: center; font-size: 11.5px; padding-bottom: 1px; }
.mon { margin-left: 17px; }
.vol { margin-left: 7px; }
.clock { margin-left: 15px; width: 64px; text-align: right; white-space: nowrap; font-size: 12px; padding-bottom: 1px; }
```
